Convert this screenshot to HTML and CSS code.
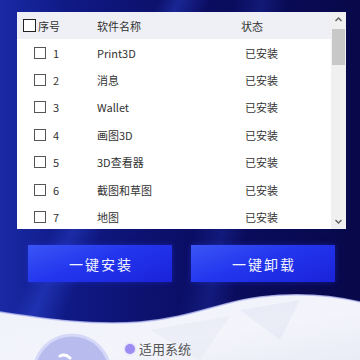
FILE: index.html
```html
<!DOCTYPE html>
<html lang="zh">
<head>
<meta charset="utf-8">
<link rel="stylesheet" href="styles.css">
</head>
<body>
<div class="app">
  <div class="panel">
    <div class="table">
      <div class="thead">
        <div class="c1"><span class="box hbox"></span><span>序号</span></div>
        <div class="c2">软件名称</div>
        <div class="c3">状态</div>
      </div>
      <div class="row"><div class="c1"><span class="box"></span><span>1</span></div><div class="c2">Print3D</div><div class="c3">已安装</div></div>
      <div class="row"><div class="c1"><span class="box"></span><span>2</span></div><div class="c2">消息</div><div class="c3">已安装</div></div>
      <div class="row"><div class="c1"><span class="box"></span><span>3</span></div><div class="c2">Wallet</div><div class="c3">已安装</div></div>
      <div class="row"><div class="c1"><span class="box"></span><span>4</span></div><div class="c2">画图3D</div><div class="c3">已安装</div></div>
      <div class="row"><div class="c1"><span class="box"></span><span>5</span></div><div class="c2">3D查看器</div><div class="c3">已安装</div></div>
      <div class="row"><div class="c1"><span class="box"></span><span>6</span></div><div class="c2">截图和草图</div><div class="c3">已安装</div></div>
      <div class="row"><div class="c1"><span class="box"></span><span>7</span></div><div class="c2">地图</div><div class="c3">已安装</div></div>
    </div>
    <div class="scrollbar">
      <svg class="arrow" width="15" height="15" viewBox="0 0 15 15"><path d="M4.5 9 L7.5 6 L10.5 9" fill="none" stroke="#606060" stroke-width="1.4"/></svg>
      <div class="track"><div class="thumb"></div></div>
      <svg class="arrow" width="15" height="15" viewBox="0 0 15 15"><path d="M4.5 6 L7.5 9 L10.5 6" fill="none" stroke="#606060" stroke-width="1.4"/></svg>
    </div>
  </div>
  <div class="actions">
    <button class="btn">一键安装</button>
    <button class="btn">一键卸载</button>
  </div>
  <div class="footer">
    <svg class="wave" width="360" height="80" viewBox="0 0 360 80">
      <defs>
        <linearGradient id="wg" x1="0" y1="0" x2="1" y2="1">
          <stop offset="0" stop-color="#eef0fa"/>
          <stop offset="0.6" stop-color="#f4f5fb"/>
          <stop offset="1" stop-color="#e9ebf6"/>
        </linearGradient>
      </defs>
      <path d="M0 32 C40 38 90 46 140 42 C190 38 220 22 260 17 C300 12 335 16 360 22 L360 80 L0 80 Z" fill="url(#wg)"/>
      <path d="M0 32 C40 38 90 46 140 42 C190 38 220 22 260 17 C300 12 335 16 360 22" fill="none" stroke="#b9bdf2" stroke-width="1.5" opacity="0.8"/>
      <path d="M240 30 L300 20 L280 60 Z" fill="#e3e6f3" opacity="0.6"/>
      <path d="M150 50 L230 36 L200 80 Z" fill="#e6e8f4" opacity="0.5"/>
      <circle cx="72" cy="93" r="38" fill="#b7bbee"/>
      <circle cx="72" cy="93" r="38" fill="none" stroke="#d5d8f6" stroke-width="3"/>
      <path d="M60 76 C64 74 68 76 70 78" fill="none" stroke="#ffffff" stroke-width="3" stroke-linecap="round"/>
    </svg>
    <div class="sys"><span class="dot"></span><span>适用系统</span></div>
  </div>
</div>
</body>
</html>
```
FILE: styles.css
```css
* { box-sizing: border-box; }
html, body { margin: 0; padding: 0; }
body {
  width: 360px;
  height: 360px;
  overflow: hidden;
  font-family: "Noto Sans CJK SC", "Noto Sans", sans-serif;
}
.app {
  width: 360px;
  height: 360px;
  overflow: hidden;
  display: flex;
  flex-direction: column;
  background:
    linear-gradient(115deg, rgba(40,70,220,0) 30%, rgba(50,80,230,0.35) 34%, rgba(40,70,220,0) 40%),
    linear-gradient(100deg, rgba(40,60,200,0) 55%, rgba(40,70,210,0.25) 62%, rgba(40,60,200,0) 68%),
    linear-gradient(90deg, #1a2aa6 0%, #101a86 18%, #0b0d62 55%, #08084a 100%);
}
.panel {
  margin: 12px 14px 0 17px;
  height: 217px;
  background: #ffffff;
  display: flex;
  overflow: hidden;
}
.table {
  flex: 1;
  color: #333;
  font-size: 11px;
}
.thead, .row {
  display: grid;
  grid-template-columns: 79px 145px 1fr;
  align-items: center;
}
.thead {
  height: 27px;
  background: #eef0f5;
}
.row {
  height: 27.4px;
}
.c1 {
  display: flex;
  align-items: center;
}
.thead .c1 { padding-left: 6px; gap: 2px; }
.row .c1 { padding-left: 17px; gap: 7px; }
.c2 { padding-left: 1px; }
.thead .c3 { padding-left: 0; }
.row .c3 { padding-left: 4px; }
.box {
  display: inline-block;
  width: 12px;
  height: 12px;
  border: 1px solid #555;
  background: #fff;
}
.hbox {
  width: 13px;
  height: 13px;
  border: 1.5px solid #222;
}
.scrollbar {
  width: 15px;
  background: #f0f0f0;
  display: flex;
  flex-direction: column;
}
.arrow { display: block; flex: none; }
.track { flex: 1; padding: 2px 1px; }
.thumb {
  height: 36px;
  background: #c8c8c8;
}
.actions {
  display: flex;
  gap: 19px;
  padding: 16px 0 0 28px;
}
.btn {
  width: 144px;
  height: 37px;
  border: none;
  padding: 0 0 0 2px;
  color: #f2f4ff;
  font-family: "Noto Sans CJK SC", sans-serif;
  font-size: 14px;
  letter-spacing: 2px;
  background: linear-gradient(160deg, #3a55f5 0%, #2336ee 45%, #1a22d8 100%);
  box-shadow: 0 0 6px rgba(40, 60, 255, 0.35);
}
.footer {
  flex: 1;
  position: relative;
  margin-top: -2px;
}
.wave {
  position: absolute;
  left: 0;
  top: 0;
}
.sys {
  position: relative;
  display: flex;
  align-items: center;
  gap: 4px;
  padding: 61px 0 0 125px;
  font-size: 13px;
  color: #555;
  line-height: 16px;
}
.dot {
  width: 10px;
  height: 10px;
  border-radius: 50%;
  background: #9d8cf2;
  box-shadow: 0 0 3px #c6b9ff;
}
```
